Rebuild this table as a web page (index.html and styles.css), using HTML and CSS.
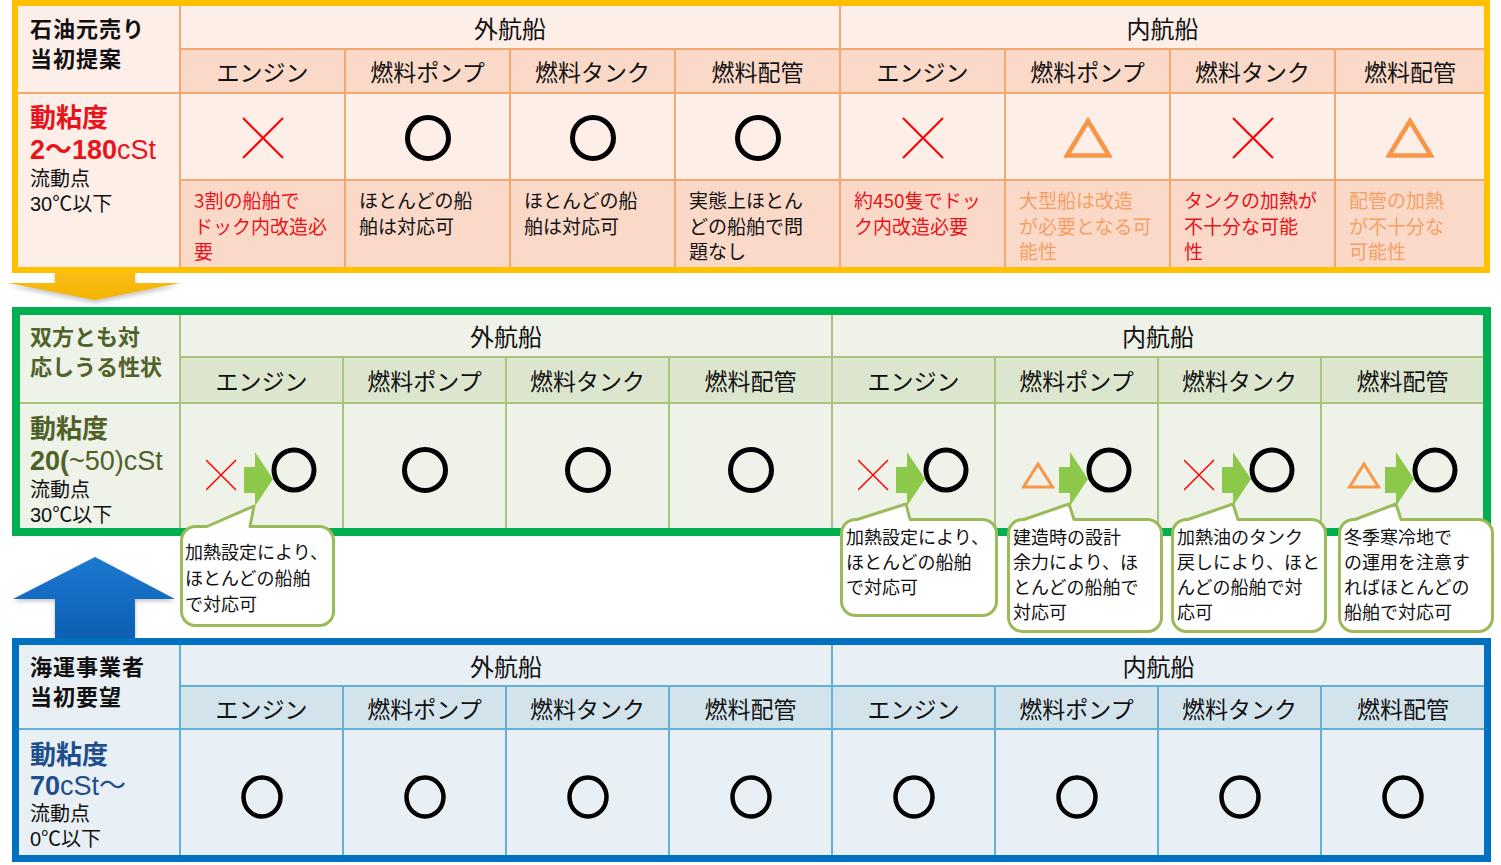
FILE: index.html
```html
<!DOCTYPE html>
<html lang="ja">
<head>
<meta charset="utf-8">
<title>燃料油の性状比較</title>
<link rel="stylesheet" href="styles.css">
</head>
<body>
<main class="page">
  <svg class="defs" aria-hidden="true">
    <defs>
      <linearGradient id="g-yellow" x1="0" y1="0" x2="0" y2="1">
        <stop offset="0" stop-color="#ffc533"/>
        <stop offset="1" stop-color="#f5b400"/>
      </linearGradient>
      <linearGradient id="g-blue" x1="0" y1="0" x2="0" y2="1">
        <stop offset="0" stop-color="#1c78cf"/>
        <stop offset="1" stop-color="#0b5eb2"/>
      </linearGradient>
      <symbol id="i-o" viewBox="0 0 48 48">
        <circle cx="24" cy="24" r="20.5" fill="none" stroke="#000" stroke-width="5"/>
      </symbol>
      <symbol id="i-ob" viewBox="0 0 44 44">
        <ellipse cx="22" cy="22" rx="18.5" ry="19.5" fill="none" stroke="#000" stroke-width="4.5"/>
      </symbol>
      <symbol id="i-x" viewBox="0 0 44 44">
        <path d="M2 2L42 42M42 2L2 42" fill="none" stroke="#ff0000" stroke-width="2"/>
      </symbol>
      <symbol id="i-tri" viewBox="0 0 48 42">
        <polygon points="24,4 3,38.5 45,38.5" fill="none" stroke="#f79646" stroke-width="4.5"/>
      </symbol>
      <symbol id="i-xo" viewBox="0 0 112 62">
        <path d="M0 15L30 45M30 15L0 45" fill="none" stroke="#ff0000" stroke-width="1.5"/>
        <polygon points="38,22 49,22 49,7 67,34 49,61 49,48 38,48" fill="#8cc94a"/>
        <circle cx="88" cy="25" r="20" fill="none" stroke="#000" stroke-width="5"/>
      </symbol>
      <symbol id="i-to" viewBox="0 0 112 62">
        <polygon points="17,19 2.5,42 31.5,42" fill="none" stroke="#f79646" stroke-width="3"/>
        <polygon points="38,22 49,22 49,7 67,34 49,61 49,48 38,48" fill="#8cc94a"/>
        <circle cx="88" cy="25" r="20" fill="none" stroke="#000" stroke-width="5"/>
      </symbol>
    </defs>
  </svg>

  <svg class="arrow-down" viewBox="0 0 190 70" aria-hidden="true">
    <polygon points="55,0 135,0 135,43 180,43 95,60 8,43 55,43" fill="url(#g-yellow)"/>
  </svg>

  <svg class="arrow-up" viewBox="0 0 190 95" aria-hidden="true">
    <polygon points="95,7 175,49 135,49 135,95 55,95 55,49 13,49" fill="url(#g-blue)"/>
  </svg>

  <!-- 石油元売り 当初提案 -->
  <section class="tbl oil">
    <div class="title"><span class="tl">石油元売り</span><span class="tl">当初提案</span></div>
    <div class="grp">外航船</div>
    <div class="grp">内航船</div>
    <div class="hd">エンジン</div>
    <div class="hd">燃料ポンプ</div>
    <div class="hd">燃料タンク</div>
    <div class="hd">燃料配管</div>
    <div class="hd">エンジン</div>
    <div class="hd">燃料ポンプ</div>
    <div class="hd">燃料タンク</div>
    <div class="hd">燃料配管</div>
    <div class="spec">
      <p class="sp-name">動粘度</p>
      <p class="sp-val"><b>2〜180</b>cSt</p>
      <p class="sp-sub">流動点</p>
      <p class="sp-sub sp-last">30℃以下</p>
    </div>
    <div class="sym"><svg class="ic-x"><use href="#i-x"/></svg></div>
    <div class="sym"><svg class="ic-o"><use href="#i-o"/></svg></div>
    <div class="sym"><svg class="ic-o"><use href="#i-o"/></svg></div>
    <div class="sym"><svg class="ic-o"><use href="#i-o"/></svg></div>
    <div class="sym"><svg class="ic-x"><use href="#i-x"/></svg></div>
    <div class="sym"><svg class="ic-tri"><use href="#i-tri"/></svg></div>
    <div class="sym"><svg class="ic-x"><use href="#i-x"/></svg></div>
    <div class="sym"><svg class="ic-tri"><use href="#i-tri"/></svg></div>
    <div class="note red">3割の船舶で<br>ドック内改造必<br>要</div>
    <div class="note">ほとんどの船<br>舶は対応可</div>
    <div class="note">ほとんどの船<br>舶は対応可</div>
    <div class="note">実態上ほとん<br>どの船舶で問<br>題なし</div>
    <div class="note red">約450隻でドッ<br>ク内改造必要</div>
    <div class="note orange">大型船は改造<br>が必要となる可<br>能性</div>
    <div class="note red">タンクの加熱が<br>不十分な可能<br>性</div>
    <div class="note orange">配管の加熱<br>が不十分な<br>可能性</div>
  </section>

  <!-- 双方とも対応しうる性状 -->
  <section class="tbl agree">
    <div class="title"><span class="tl">双方とも対</span><span class="tl">応しうる性状</span></div>
    <div class="grp">外航船</div>
    <div class="grp">内航船</div>
    <div class="hd">エンジン</div>
    <div class="hd">燃料ポンプ</div>
    <div class="hd">燃料タンク</div>
    <div class="hd">燃料配管</div>
    <div class="hd">エンジン</div>
    <div class="hd">燃料ポンプ</div>
    <div class="hd">燃料タンク</div>
    <div class="hd">燃料配管</div>
    <div class="spec">
      <p class="sp-name">動粘度</p>
      <p class="sp-val"><b>20(</b>~50)cSt</p>
      <p class="sp-sub">流動点</p>
      <p class="sp-sub sp-last">30℃以下</p>
    </div>
    <div class="sym combo-cell"><svg class="combo"><use href="#i-xo"/></svg></div>
    <div class="sym"><svg class="ic-o"><use href="#i-o"/></svg></div>
    <div class="sym"><svg class="ic-o"><use href="#i-o"/></svg></div>
    <div class="sym"><svg class="ic-o"><use href="#i-o"/></svg></div>
    <div class="sym combo-cell"><svg class="combo"><use href="#i-xo"/></svg></div>
    <div class="sym combo-cell"><svg class="combo"><use href="#i-to"/></svg></div>
    <div class="sym combo-cell"><svg class="combo"><use href="#i-xo"/></svg></div>
    <div class="sym combo-cell"><svg class="combo"><use href="#i-to"/></svg></div>
  </section>

  <!-- 海運事業者 当初要望 -->
  <section class="tbl ship">
    <div class="title"><span class="tl">海運事業者</span><span class="tl">当初要望</span></div>
    <div class="grp">外航船</div>
    <div class="grp">内航船</div>
    <div class="hd">エンジン</div>
    <div class="hd">燃料ポンプ</div>
    <div class="hd">燃料タンク</div>
    <div class="hd">燃料配管</div>
    <div class="hd">エンジン</div>
    <div class="hd">燃料ポンプ</div>
    <div class="hd">燃料タンク</div>
    <div class="hd">燃料配管</div>
    <div class="spec">
      <p class="sp-name">動粘度</p>
      <p class="sp-val"><b>70</b>cSt〜</p>
      <p class="sp-sub">流動点</p>
      <p class="sp-sub sp-last">0℃以下</p>
    </div>
    <div class="sym"><svg class="ic-ob"><use href="#i-ob"/></svg></div>
    <div class="sym"><svg class="ic-ob"><use href="#i-ob"/></svg></div>
    <div class="sym"><svg class="ic-ob"><use href="#i-ob"/></svg></div>
    <div class="sym"><svg class="ic-ob"><use href="#i-ob"/></svg></div>
    <div class="sym"><svg class="ic-ob"><use href="#i-ob"/></svg></div>
    <div class="sym"><svg class="ic-ob"><use href="#i-ob"/></svg></div>
    <div class="sym"><svg class="ic-ob"><use href="#i-ob"/></svg></div>
    <div class="sym"><svg class="ic-ob"><use href="#i-ob"/></svg></div>
  </section>

  <!-- callouts -->
  <div class="callout c0">
    <svg class="callout-bg" width="155" height="102"><path d="M15.5,1.5 L27,1.5 L74,-19 L70,1.5 L139.5,1.5 A14 14 0 0 1 153.5,15.5 L153.5,86.5 A14 14 0 0 1 139.5,100.5 L15.5,100.5 A14 14 0 0 1 1.5,86.5 L1.5,15.5 A14 14 0 0 1 15.5,1.5 Z"/></svg>
    <p>加熱設定により、<br>ほとんどの船舶<br>で対応可</p>
  </div>
  <div class="callout c1">
    <svg class="callout-bg" width="158" height="99"><path d="M15.5,1.5 L17,1.5 L66,-14 L70,1.5 L142.5,1.5 A14 14 0 0 1 156.5,15.5 L156.5,83.5 A14 14 0 0 1 142.5,97.5 L15.5,97.5 A14 14 0 0 1 1.5,83.5 L1.5,15.5 A14 14 0 0 1 15.5,1.5 Z"/></svg>
    <p>加熱設定により、<br>ほとんどの船舶<br>で対応可</p>
  </div>
  <div class="callout c2">
    <svg class="callout-bg" width="156" height="115"><path d="M15.5,1.5 L17,1.5 L62,-14 L67,1.5 L140.5,1.5 A14 14 0 0 1 154.5,15.5 L154.5,99.5 A14 14 0 0 1 140.5,113.5 L15.5,113.5 A14 14 0 0 1 1.5,99.5 L1.5,15.5 A14 14 0 0 1 15.5,1.5 Z"/></svg>
    <p>建造時の設計<br>余力により、ほ<br>とんどの船舶で<br>対応可</p>
  </div>
  <div class="callout c3">
    <svg class="callout-bg" width="156" height="115"><path d="M15.5,1.5 L17,1.5 L62,-14 L67,1.5 L140.5,1.5 A14 14 0 0 1 154.5,15.5 L154.5,99.5 A14 14 0 0 1 140.5,113.5 L15.5,113.5 A14 14 0 0 1 1.5,99.5 L1.5,15.5 A14 14 0 0 1 15.5,1.5 Z"/></svg>
    <p>加熱油のタンク<br>戻しにより、ほと<br>んどの船舶で対<br>応可</p>
  </div>
  <div class="callout c4">
    <svg class="callout-bg" width="156" height="115"><path d="M15.5,1.5 L17,1.5 L58,-14 L63,1.5 L140.5,1.5 A14 14 0 0 1 154.5,15.5 L154.5,99.5 A14 14 0 0 1 140.5,113.5 L15.5,113.5 A14 14 0 0 1 1.5,99.5 L1.5,15.5 A14 14 0 0 1 15.5,1.5 Z"/></svg>
    <p>冬季寒冷地で<br>の運用を注意す<br>ればほとんどの<br>船舶で対応可</p>
  </div>
</main>
</body>
</html>
```

FILE: styles.css
```css
* {
  box-sizing: border-box;
  margin: 0;
  padding: 0;
}

html,
body {
  background: #ffffff;
}

body {
  font-family: "Noto Sans CJK JP", "Noto Sans", sans-serif;
  color: #111111;
}

.page {
  position: relative;
  width: 1501px;
  height: 865px;
  overflow: hidden;
}

.defs {
  position: absolute;
  width: 0;
  height: 0;
  overflow: hidden;
}

/* big arrows between the tables */
.arrow-down {
  position: absolute;
  left: 0;
  top: 240px;
  width: 190px;
  height: 70px;
  z-index: 1;
  filter: drop-shadow(0 3px 2px rgba(0, 0, 0, 0.22));
}

.arrow-up {
  position: absolute;
  left: 0;
  top: 550px;
  width: 190px;
  height: 95px;
  z-index: 1;
  filter: drop-shadow(0 2px 2px rgba(0, 0, 0, 0.25));
}

/* tables */
.tbl {
  position: relative;
  z-index: 2;
  display: grid;
  gap: 2px;
  width: max-content;
  margin-left: 12px;
}

.oil {
  border: 6px solid #ffc000;
  background: #f4a870;
  grid-template-columns: 161px repeat(7, 163px) 148px;
  grid-template-rows: 42px 42px 85px 86px;
}

.agree {
  margin-top: 34px;
  border: 8px solid #00b050;
  background: #a9c47f;
  grid-template-columns: 159px repeat(7, 161px) 161px;
  grid-template-rows: 41px 44px 124px;
}

.ship {
  margin-top: 102px;
  border: 7px solid #0070c0;
  background: #64b0d4;
  grid-template-columns: 160px repeat(7, 161px) 162px;
  grid-template-rows: 40px 41px 125px;
}

.title {
  grid-column: 1;
  grid-row: 1 / 3;
  display: flex;
  flex-direction: column;
  font-size: 22px;
  font-weight: bold;
  letter-spacing: 1px;
  padding: 6px 0 0 12px;
  white-space: nowrap;
}

.tl {
  display: block;
  height: 30px;
  line-height: 30px;
}

.agree .title {
  letter-spacing: 0;
}

.grp {
  grid-column: span 4;
  display: flex;
  align-items: center;
  justify-content: center;
  font-size: 24px;
}

.hd {
  display: flex;
  align-items: center;
  justify-content: center;
  font-size: 23px;
  white-space: nowrap;
}

.spec {
  grid-column: 1;
  grid-row: 3 / 5;
  padding: 4px 0 0 12px;
  white-space: nowrap;
}

.agree .spec,
.ship .spec {
  grid-row: 3 / 4;
  padding-top: 5px;
}

.agree .title,
.ship .title {
  padding-top: 5px;
}

.agree .title,
.agree .spec {
  padding-left: 10px;
}

.ship .title,
.ship .spec {
  padding-left: 11px;
}

.sp-name {
  font-size: 26px;
  font-weight: bold;
  line-height: 36px;
}

.sp-val {
  font-family: "Liberation Sans", "Noto Sans CJK JP", sans-serif;
  font-size: 27px;
  line-height: 32px;
}

.ship .sp-val {
  line-height: 30px;
}

.sp-sub {
  font-family: "Liberation Sans", "Noto Sans CJK JP", sans-serif;
  font-size: 20px;
  line-height: 26px;
  color: #111111;
}

.sp-last {
  line-height: 24px;
}

.sym {
  display: flex;
  align-items: center;
  justify-content: center;
}

.note {
  font-size: 19px;
  line-height: 25.5px;
  padding: 6px 2px 0 13px;
  white-space: nowrap;
}

.red {
  color: #e8141b;
}

.orange {
  color: #f4a064;
}

/* oil table colours */
.oil .title,
.oil .grp,
.oil .spec,
.oil .sym {
  background: #fdeee8;
}

.oil .hd,
.oil .note {
  background: #fbd9c9;
}

.oil .sp-name,
.oil .sp-val {
  color: #e8141b;
}

.oil .sym {
  padding-top: 3px;
}

/* agree table colours */
.agree .title,
.agree .grp,
.agree .spec,
.agree .sym {
  background: #eef2e8;
}

.agree .hd {
  background: #dce6cf;
}

.agree .title,
.agree .sp-name,
.agree .sp-val {
  color: #4f6228;
}

.agree .sym {
  padding-top: 8px;
}

.agree .combo-cell {
  padding-top: 20px;
}

/* ship table colours */
.ship .title,
.ship .grp,
.ship .spec,
.ship .sym {
  background: #e9f0f5;
}

.ship .hd {
  background: #d3e3ec;
}

.ship .sp-name,
.ship .sp-val {
  color: #1f4e8c;
}

.ship .sym {
  padding-top: 9px;
}

/* icons */
.ic-o {
  width: 48px;
  height: 48px;
}

.ic-ob {
  width: 44px;
  height: 44px;
}

.ic-x {
  width: 44px;
  height: 44px;
}

.ic-tri {
  width: 48px;
  height: 42px;
}

.combo {
  width: 112px;
  height: 62px;
}

/* callouts */
.callout {
  position: absolute;
  z-index: 3;
}

.callout-bg {
  position: absolute;
  left: 0;
  top: 0;
  overflow: visible;
}

.callout-bg path {
  fill: #ffffff;
  stroke: #9bbb59;
  stroke-width: 3;
  stroke-linejoin: round;
}

.callout p {
  position: relative;
  font-size: 18px;
  line-height: 25px;
  padding: 6px 0 0 6px;
  white-space: nowrap;
  color: #111111;
}

.c0 {
  left: 180px;
  top: 525px;
  width: 155px;
  height: 102px;
}

.c0 p {
  padding: 13px 0 0 5px;
  line-height: 26px;
}

.c1 {
  left: 840px;
  top: 518px;
  width: 158px;
  height: 99px;
}

.c2 {
  left: 1007px;
  top: 518px;
  width: 156px;
  height: 115px;
}

.c3 {
  left: 1171px;
  top: 518px;
  width: 156px;
  height: 115px;
}

.c4 {
  left: 1338px;
  top: 518px;
  width: 156px;
  height: 115px;
}
```
